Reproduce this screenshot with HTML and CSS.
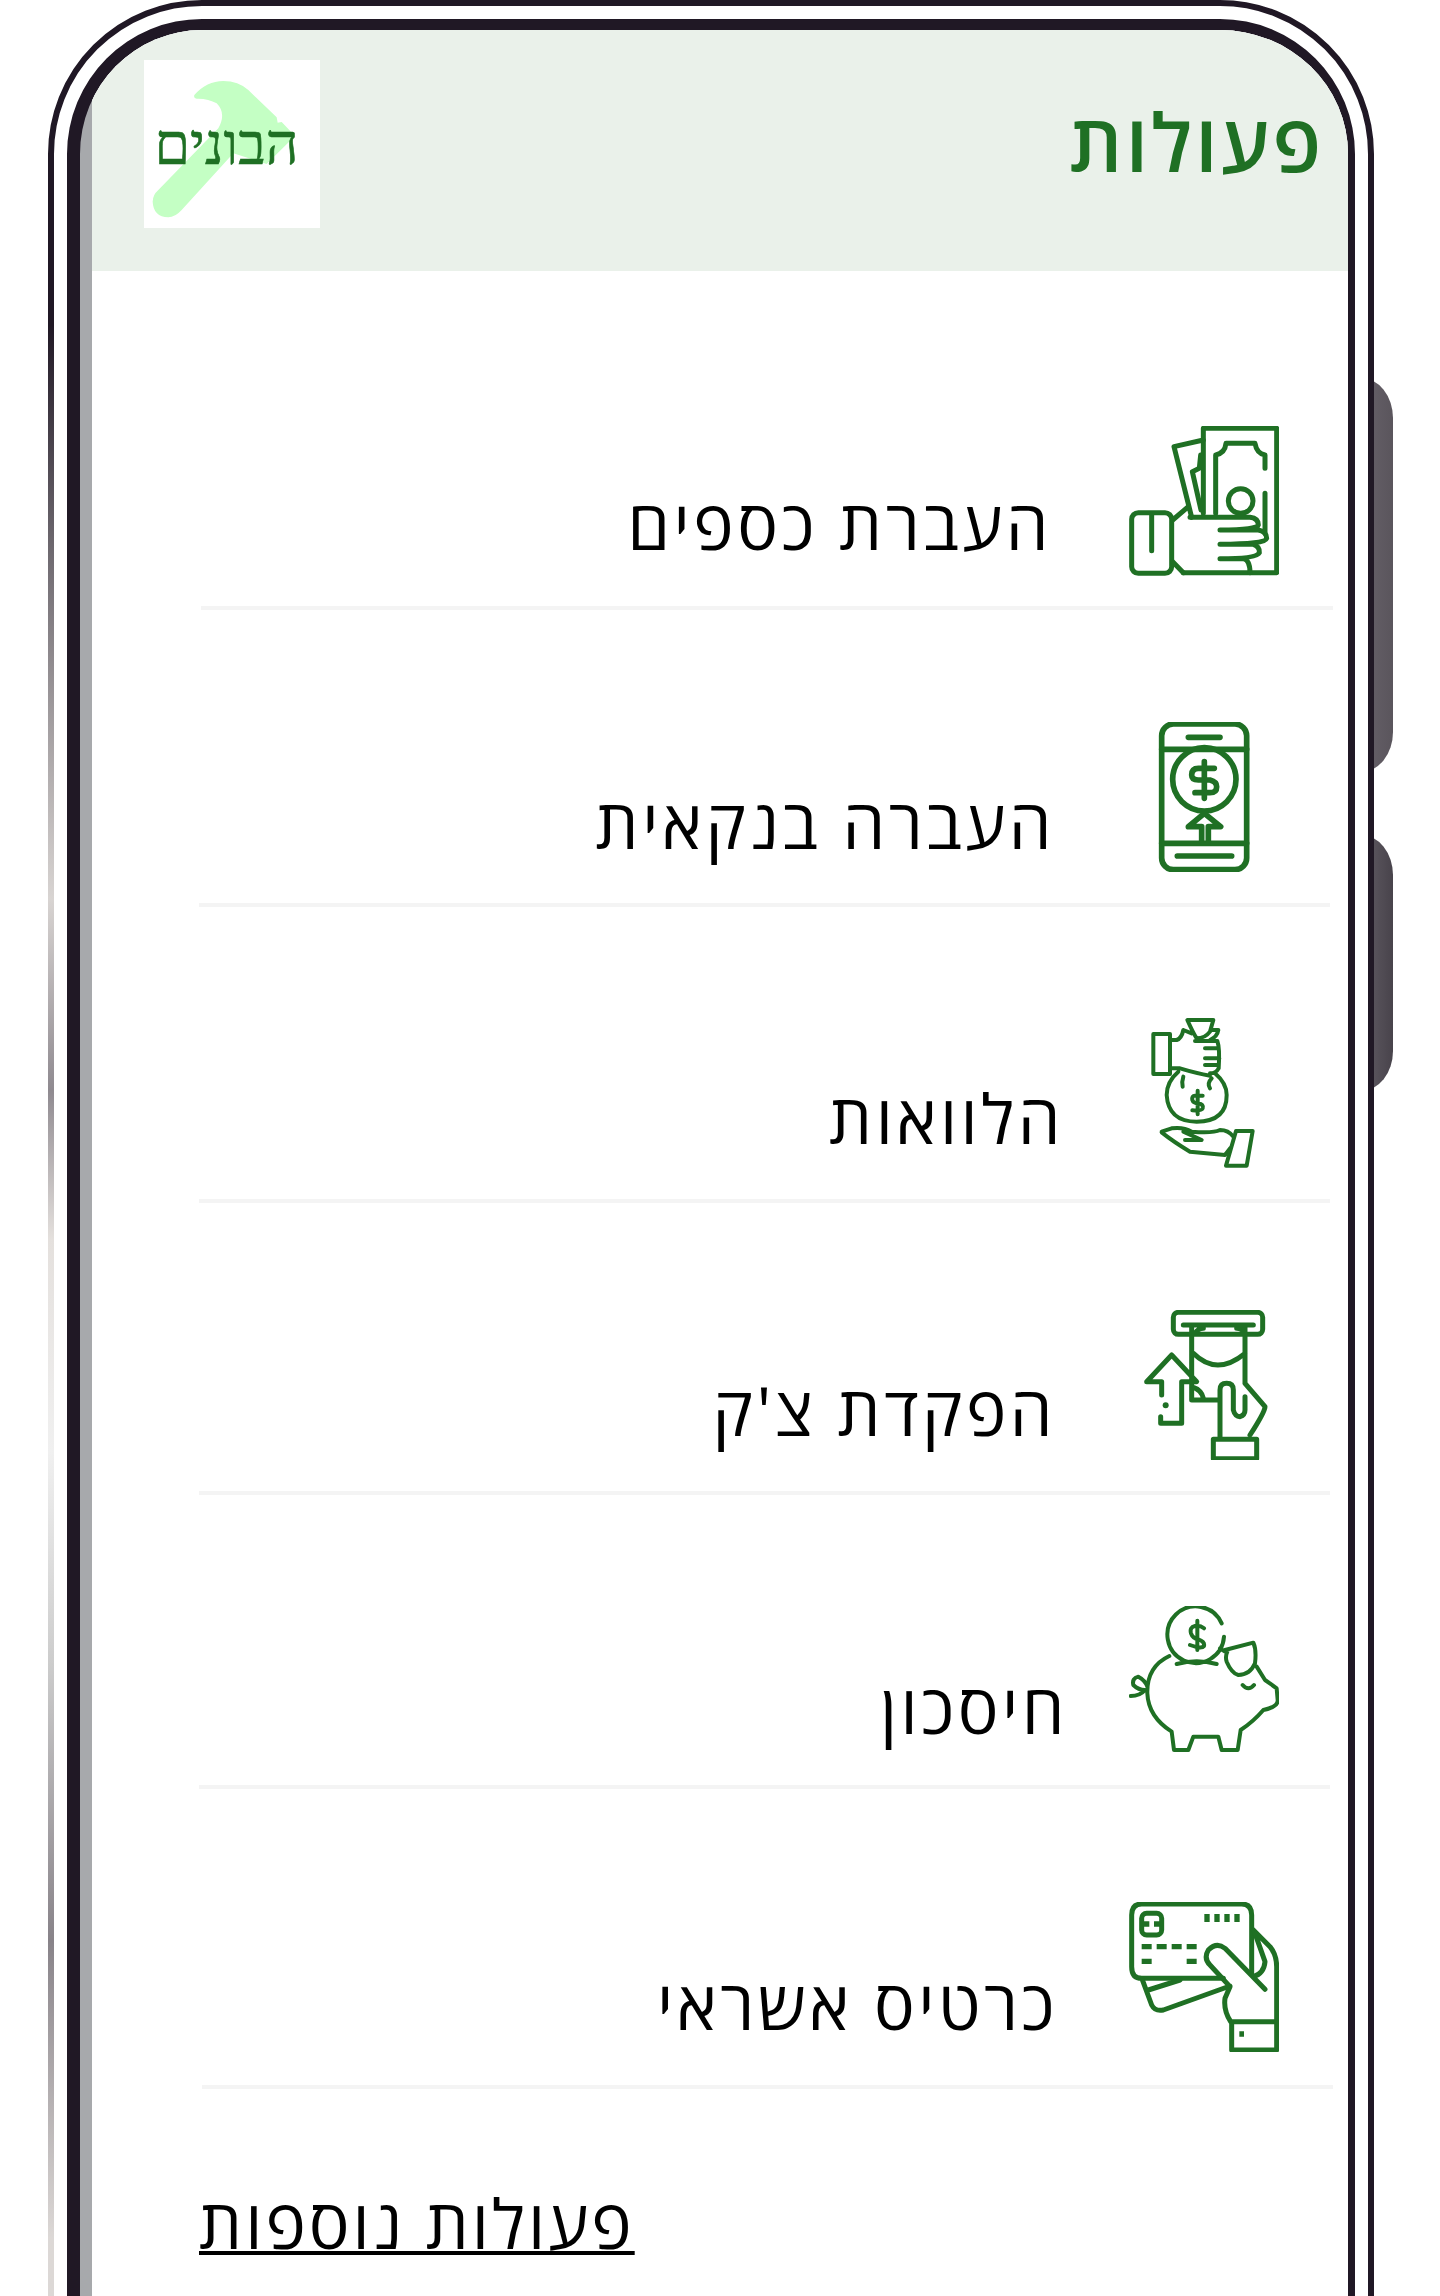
FILE: index.html
```html
<!DOCTYPE html>
<html lang="he" dir="rtl">
<head>
<meta charset="utf-8">
<title>פעולות</title>
<link rel="stylesheet" href="styles.css">
</head>
<body>
<div class="stage">
  <div class="btn btn-a"></div>
  <div class="btn btn-b"></div>
  <div class="phone">
    <div class="edge"></div>
    <div class="bezel">
      <div class="screen">
        <div class="content">
          <header class="head">
            <h1 class="title">פעולות</h1>
            <div class="logo">
              <svg class="hammer" viewBox="432 180 528 504"><path d="M583 285Q620 243 670 243Q715 243 745 270L830 352L833 368L845 366L885 408L800 492L700 460L545 630Q525 652 505 652Q460 650 458 605Q458 585 475 570L655 385Q680 340 650 310Q625 295 590 296Q580 295 583 285Z"/></svg>
              <span class="logo-text">הבונים</span>
            </div>
          </header>
          <main class="list">
            <a class="row row-1">
              <svg class="icon" viewBox="87 48 450 450"><path d="M310 310V55H530V488H250"/><rect x="95" y="308" width="120" height="182" rx="20"/><path d="M155 315V422M218 330L265 290M218 455L250 488M310 90L222 110L275 322M302 135L298 175L277 185L303 300M347 310V135Q375 130 378 100H465Q470 130 495 135V175M495 250V370"/><circle cx="422" cy="273" r="37"/><path d="M270 322H450Q475 325 475 345Q472 360 360 360H475Q500 365 500 385Q495 403 360 403H460Q480 410 478 428Q470 446 360 446H430Q450 450 450 488"/></svg>
              <span class="label">העברת כספים</span>
            </a>
            <a class="row row-2">
              <svg class="icon icon-thick" viewBox="-3 36 450 450"><rect x="95" y="42" width="255" height="437" rx="35"/><path d="M95 118H350M95 400H350M175 82H270M142 438H305"/><circle cx="223" cy="208" r="95"/><path d="M253 175H205Q185 175 185 195Q185 210 205 210H240Q260 215 260 230Q260 248 240 248H195M223 155V265M215 395V350H175L223 310L272 350H235V395"/></svg>
              <span class="label">העברה בנקאית</span>
            </a>
            <a class="row row-3">
              <svg class="icon icon-thin" viewBox="-3 39 450 450"><rect x="70" y="87" width="50" height="120"/><path d="M120 105H140Q155 100 160 75L185 85M172 45H250L240 80Q225 100 200 100Q190 85 172 45ZM248 75L265 75Q262 95 240 105M195 108H262Q270 130 266 190Q258 205 240 205M225 130H265M225 160H268M225 180H265M120 190H150Q200 205 240 212M145 200Q110 230 110 270Q115 350 200 350Q290 350 290 270Q290 235 255 205M160 215Q155 230 158 245M245 220Q230 235 240 250M218 272H195Q185 272 187 285Q190 295 205 295Q222 298 218 310Q215 318 187 316M203 257V328M95 380L125 370Q160 365 185 380Q250 385 270 375Q295 375 310 395M95 382Q130 410 180 440L285 450L300 430M160 380L215 405H165"/><path d="M318 378H368L350 482H288Z"/></svg>
              <span class="label">הלוואות</span>
            </a>
            <a class="row row-4">
              <svg class="icon" viewBox="-3 30 450 450"><rect x="130" y="37" width="268" height="66" rx="15"/><path d="M160 75H370M185 80V300H270M345 80V250M195 100Q205 85 220 85M345 100Q335 85 320 85M190 160Q260 230 345 160M95 285V245H50L125 165L200 245H155V370H92V350M185 260Q215 270 220 295M270 410V270Q270 250 290 250Q310 250 310 270V330Q315 350 330 350Q345 345 345 330V290M345 250L405 320Q405 335 360 405"/><circle class="dot" cx="107" cy="316" r="9"/><rect x="250" y="418" width="130" height="58"/></svg>
              <span class="label">הפקדת צ'ק</span>
            </a>
            <a class="row row-5">
              <svg class="icon icon-thin" viewBox="57 48 450 450"><path d="M335 100A85 85 0 1 0 342 140M200 222Q260 205 320 222M282 115Q270 105 255 108Q238 112 243 130Q248 145 265 148Q285 155 282 168Q275 178 240 165M262 92V180M178 198Q110 230 112 310Q115 380 185 425L192 480H235L250 440H325L335 480H383L392 420Q430 395 460 360Q505 350 503 330L500 295Q480 280 465 270L440 230M345 180L430 158Q440 180 435 220Q420 255 385 255Q365 250 350 215Q345 200 352 185M398 285Q415 305 432 285M112 290Q105 270 85 260Q65 265 70 285Q85 300 105 300Q90 318 62 318M330 175L345 185"/></svg>
              <span class="label">חיסכון</span>
            </a>
            <a class="row row-6">
              <svg class="icon" viewBox="57 36 450 450"><path d="M340 265H95Q65 265 65 230V75Q65 42 95 42H395Q425 42 425 75V250"/><rect x="95" y="70" width="60" height="65" rx="15"/><path class="butt" d="M98 102H118M132 102H152M291 72V96M321 72V96M351 72V96M381 72V96M95 170H125M140 170H170M185 170H215M230 170H260M95 214H125M230 214H260M388 432H402"/><path d="M98 272L125 345Q135 365 160 360L360 288M115 300L210 270M430 120L480 170Q500 195 500 230V395M365 395H500V480H365ZM362 395Q340 360 345 325L360 290L300 225Q280 205 295 180Q320 155 345 175L465 298M435 130L465 215Q462 250 430 260"/></svg>
              <span class="label">כרטיס אשראי</span>
            </a>
            <div class="more"><a class="more-link">פעולות נוספות</a></div>
          </main>
        </div>
      </div>
    </div>
  </div>
</div>
</body>
</html>
```
FILE: styles.css
```css
html, body { margin: 0; padding: 0; background: #fff; }
.stage { position: relative; width: 1440px; height: 2296px; overflow: hidden; font-family: "Open Sans", "Noto Sans", sans-serif; }
.btn { position: absolute; left: 1360px; width: 33px; border-radius: 0 32px 32px 0 / 0 40px 40px 0; }
.btn-a { top: 378px; height: 394px; background: linear-gradient(90deg, #68626b, #5a555c); }
.btn-b { top: 835px; height: 256px; background: linear-gradient(90deg, #635e66, #48434b); }
.phone { position: relative; box-sizing: border-box; margin-right: 66px; width: 1326px; height: 2500px; padding: 13px; border: 6px solid #201825; border-radius: 154px; background: #fff; }
.edge { position: absolute; left: -6px; top: 170px; width: 6px; height: 2126px; background: linear-gradient(180deg, #201825 0, #201825 7%, #6a656c 17%, #d8d4d2 34%, #8f8a90 43%, #e4e0dd 50%, #f0f0f0 60%, #ccc 70%, #888389 83%, #dcd8d6 97%); }
.bezel { box-sizing: border-box; height: 100%; border-style: solid; border-color: #201825; border-width: 11px 7px 11px 13px; border-radius: 135px; overflow: hidden; background: #a7a9ac; padding-left: 12px; }
.screen { height: 100%; }
.content { height: 100%; background: #fff; }
.head { display: flex; justify-content: space-between; box-sizing: border-box; height: 241px; padding: 30px 24px 0 52px; background: #eaf1ea; }
.title { margin: 31px 0 0; font-size: 80px; line-height: 100px; font-weight: 600; color: #1f7024; letter-spacing: 3px; }
.logo { position: relative; width: 176px; height: 168px; background: #fff; }
.hammer { display: block; width: 176px; height: 168px; fill: #c4ffc4; }
.logo-text { position: absolute; left: 8px; top: 55px; width: 149px; text-align: center; font-family: "Liberation Serif", serif; font-size: 57px; line-height: 60px; color: #1f7024; -webkit-text-stroke: 0.6px #1f7024; }
.list { display: block; }
.row { display: flex; align-items: flex-end; border-bottom: 4px solid #f4f4f4; box-sizing: content-box; color: #000; }
.icon { flex: none; display: block; width: 150px; height: 150px; fill: none; stroke: #1f7024; stroke-width: 15; stroke-linecap: round; stroke-linejoin: round; }
.icon-thick { stroke-width: 17; }
.icon-thin { stroke-width: 12; }
.butt { stroke-linecap: butt; stroke-width: 16; }
.dot { fill: #1f7024; stroke: none; }
.label { font-size: 68px; line-height: 80px; font-weight: 400; letter-spacing: 3.5px; white-space: nowrap; margin-bottom: 9px; }
.row-1 { margin: 43px 15px 0 109px; padding: 112px 54px 30px 0; height: 150px; }
.row-2 { margin: 0 18px 0 107px; padding: 112px 51px 31px 0; height: 150px; }
.row-3 { margin: 0 18px 0 107px; padding: 111px 51px 31px 0; height: 150px; }
.row-4 { margin: 0 18px 0 107px; padding: 107px 51px 31px 0; height: 150px; }
.row-5 { margin: 0 18px 0 107px; padding: 111px 51px 29px 0; height: 150px; }
.row-6 { margin: 0 15px 0 110px; padding: 113px 54px 33px 0; height: 150px; }
.row-1 .label { margin: 0 77px 12px 0; }
.row-2 .label { margin: 0 74px 9px 0; }
.row-3 .label { margin: 0 65px 10px 0; }
.row-4 .label { margin: 0 73px 10px 0; }
.row-5 .label { margin: 0 61px 8px 0; }
.row-6 .label { margin: 0 71px 8px 0; }
.more { display: flex; justify-content: flex-end; padding: 94px 0 0 107px; }
.more-link { font-size: 68px; line-height: 80px; font-weight: 400; letter-spacing: 3px; color: #000; text-decoration: underline; text-decoration-thickness: 4px; }
```
